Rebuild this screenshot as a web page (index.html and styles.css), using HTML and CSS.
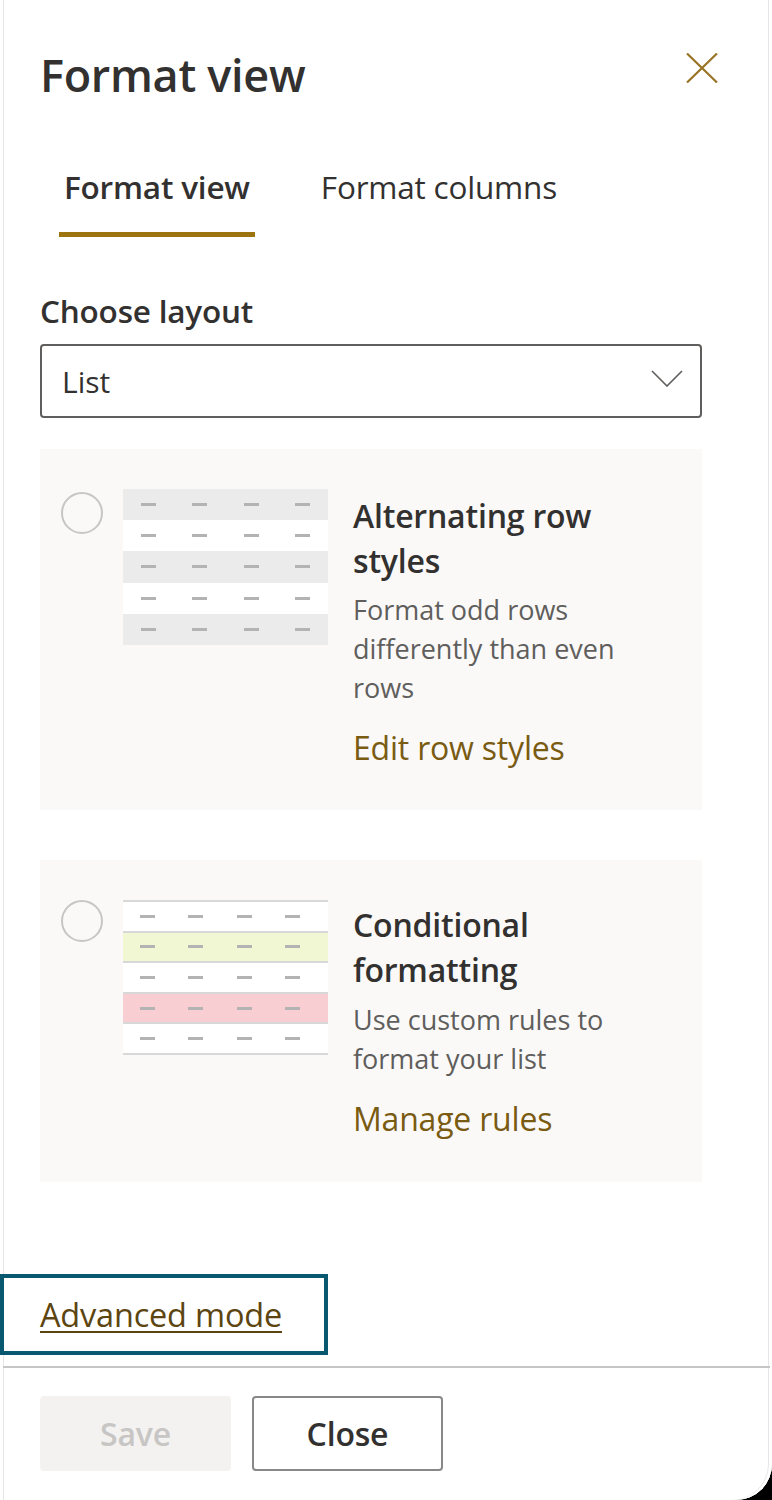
FILE: index.html
```html
<!DOCTYPE html>
<html lang="en">
<head>
<meta charset="utf-8">
<title>Format view</title>
<link rel="stylesheet" href="styles.css">
</head>
<body>
<div class="panel">
  <header class="head">
    <h1 class="title">Format view</h1>
    <button class="close-x" aria-label="Close">
      <svg width="32" height="30" viewBox="0 0 32 30"><path d="M1 0.5 L31 29.5 M31 0.5 L1 29.5" stroke="#9a7426" stroke-width="2.2" fill="none"/></svg>
    </button>
  </header>

  <nav class="tabs">
    <a class="tab active">Format view</a>
    <a class="tab">Format columns</a>
  </nav>

  <div class="label">Choose layout</div>
  <div class="select">
    <span>List</span>
    <svg width="32" height="17" viewBox="0 0 32 17"><path d="M1 1 L16 16 L31 1" stroke="#605e5c" stroke-width="1.6" fill="none"/></svg>
  </div>

  <div class="card card-one">
    <span class="radio"></span>
    <div class="thumb thumb-alt">
      <div class="row gray"><i></i><i></i><i></i><i></i></div>
      <div class="row"><i></i><i></i><i></i><i></i></div>
      <div class="row gray"><i></i><i></i><i></i><i></i></div>
      <div class="row"><i></i><i></i><i></i><i></i></div>
      <div class="row gray"><i></i><i></i><i></i><i></i></div>
    </div>
    <div class="text">
      <div class="c-title">Alternating row styles</div>
      <div class="c-desc">Format odd rows differently than even rows</div>
      <a class="c-link">Edit row styles</a>
    </div>
  </div>

  <div class="card card-two">
    <span class="radio"></span>
    <div class="thumb thumb-cond">
      <div class="row"><i></i><i></i><i></i><i></i></div>
      <div class="row green"><i></i><i></i><i></i><i></i></div>
      <div class="row"><i></i><i></i><i></i><i></i></div>
      <div class="row red"><i></i><i></i><i></i><i></i></div>
      <div class="row"><i></i><i></i><i></i><i></i></div>
    </div>
    <div class="text">
      <div class="c-title">Conditional formatting</div>
      <div class="c-desc">Use custom rules to format your list</div>
      <a class="c-link">Manage rules</a>
    </div>
  </div>

  <div class="adv"><a class="adv-link">Advanced mode</a></div>

  <footer class="foot">
    <button class="btn btn-save">Save</button>
    <button class="btn btn-close">Close</button>
  </footer>
</div>
</body>
</html>
```

FILE: styles.css
```css
* { box-sizing: border-box; }
html, body { margin: 0; padding: 0; background: #000; }
body {
  font-family: "Open Sans", "Noto Sans", sans-serif;
  color: #323130;
}
.panel {
  width: 772px;
  min-height: 1500px;
  background: #fff;
  border-bottom-right-radius: 36px;
  box-shadow: inset 3px 0 0 #fff, inset 4px 0 0 #e6e6e6, inset -3px 0 0 #fff, inset -4px 0 0 #e6e6e6;
  display: flex;
  flex-direction: column;
  overflow: hidden;
}
.head {
  display: flex;
  justify-content: space-between;
  align-items: flex-start;
  padding: 51px 54px 0 40px;
}
.title {
  margin: 0;
  font-size: 45px;
  line-height: 48px;
  font-weight: 600;
  color: #323130;
  letter-spacing: -0.3px;
}
.close-x {
  border: 0;
  background: none;
  padding: 0;
  margin-top: 2px;
  display: block;
  line-height: 0;
}
.tabs {
  display: flex;
  gap: 61px;
  margin: 68px 0 0 59px;
}
.tab {
  position: relative;
  padding: 0 5px 30px;
  font-size: 31.5px;
  line-height: 40px;
  color: #323130;
  letter-spacing: -0.2px;
}
.tab.active { font-weight: 600; }
.tab.active::after {
  content: "";
  position: absolute;
  left: 0;
  right: 0;
  bottom: 0;
  height: 5px;
  background: #9c7410;
}
.label {
  margin: 54px 0 0 40px;
  font-size: 31.5px;
  line-height: 40px;
  font-weight: 600;
  letter-spacing: -0.2px;
}
.select {
  margin: 13px 0 0 40px;
  width: 662px;
  height: 74px;
  border: 2px solid #605e5c;
  border-radius: 4px;
  display: flex;
  align-items: center;
  justify-content: space-between;
  padding: 0 17px 0 20px;
  font-size: 30px;
}
.select svg { margin-top: -5px; }
.card {
  margin: 31px 0 0 40px;
  width: 662px;
  background: #faf9f8;
  display: flex;
  align-items: flex-start;
  padding: 40px 0 42px 21px;
}
.card-two { margin-top: 50px; padding-bottom: 43px; }
.radio {
  flex: none;
  width: 42px;
  height: 42px;
  border: 2px solid #c8c6c4;
  border-radius: 50%;
  margin-top: 3px;
}
.card-two .radio { margin-top: 0; }
.thumb {
  flex: none;
  width: 205px;
  margin-left: 20px;
  display: flex;
  flex-direction: column;
}
.row {
  height: 31.2px;
  display: grid;
  grid-template-columns: repeat(4, 1fr);
  align-items: center;
  justify-items: center;
  background: #fff;
}
.row.gray { background: #ebebeb; }
.row i {
  display: block;
  width: 15px;
  height: 3px;
  background: #b3b3b3;
}
.thumb-cond { border-top: 2px solid #d8d8d8; }
.thumb-cond .row {
  height: 30.6px;
  border-bottom: 2px solid #d8d8d8;
  padding-right: 11px;
}
.row.green { background: #f0f7d2; }
.row.red { background: #f9ced2; }
.text {
  margin-left: 25px;
  width: 300px;
  margin-top: 4px;
}
.card-two .text { margin-top: 2px; }
.c-title {
  font-size: 32px;
  line-height: 45px;
  font-weight: 600;
  color: #323130;
  letter-spacing: -0.2px;
}
.c-desc {
  margin-top: 7px;
  font-size: 27px;
  line-height: 39px;
  color: #605e5c;
}
.card-two .c-desc { margin-top: 8px; }
.c-link {
  display: block;
  margin-top: 21px;
  font-size: 32px;
  line-height: 40px;
  color: #7a5b12;
  letter-spacing: -0.2px;
}
.adv {
  margin-top: 92px;
  width: 328px;
  height: 81px;
  border: 4px solid #08586f;
  display: flex;
  align-items: center;
  padding-left: 36px;
}
.adv-link {
  font-size: 32.5px;
  line-height: 40px;
  color: #5c4510;
  text-decoration: underline;
  text-decoration-thickness: 2px;
  text-underline-offset: 4px;
  letter-spacing: -0.2px;
}
.foot {
  margin: 11px 2px 0 3px;
  border-top: 2px solid #c8c6c4;
  padding: 28px 0 28px 37px;
  display: flex;
  gap: 21px;
}
.btn {
  width: 191px;
  height: 75px;
  border-radius: 4px;
  font-family: inherit;
  font-size: 32px;
  font-weight: 600;
  letter-spacing: -0.2px;
}
.btn-save {
  background: #f3f2f1;
  border: 0;
  color: #c8c6c4;
}
.btn-close {
  background: #fff;
  border: 2px solid #8a8886;
  color: #323130;
}
```
